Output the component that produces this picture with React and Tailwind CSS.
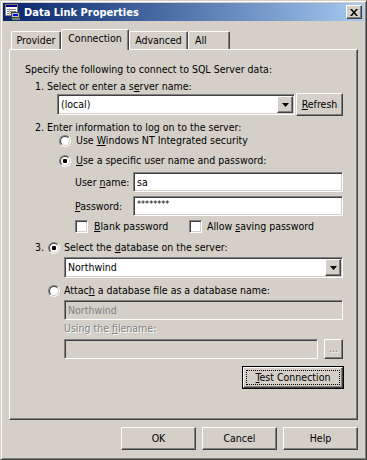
import React from "react";

const raised =
  "border border-t-white border-l-white border-r-[#404040] border-b-[#404040] shadow-[inset_-1px_-1px_0_#808080]";
const sunken =
  "border border-t-[#808080] border-l-[#808080] border-r-white border-b-white shadow-[inset_1px_1px_0_#404040,inset_-1px_-1px_0_#d4d0c8]";
const grayText = "text-[#808080] [text-shadow:1px_1px_0_#ffffff]";

function Arrow({ color = "#000" }) {
  return (
    <svg width="7" height="4" viewBox="0 0 7 4">
      <polygon points="0,0 7,0 3.5,4" fill={color} />
    </svg>
  );
}

function Combo({ value, className = "" }) {
  return (
    <div className={`flex items-stretch bg-white p-[1px] h-[21px] ${sunken} ${className}`}>
      <span className="flex-1 flex items-center pl-[2px]">{value}</span>
      <div className={`w-[16px] flex items-center justify-center bg-[#d4d0c8] ${raised}`}>
        <Arrow />
      </div>
    </div>
  );
}

function Edit({ children, className = "", disabled }) {
  return (
    <div
      className={`flex items-center h-[20px] pl-[3px] ${sunken} ${
        disabled ? "bg-[#d4d0c8] text-[#808080]" : "bg-white"
      } ${className}`}
    >
      {children}
    </div>
  );
}

function Radio({ checked }) {
  return (
    <div className="w-[12px] h-[12px] rounded-full border border-t-[#808080] border-l-[#808080] border-r-white border-b-white shrink-0">
      <div className="w-full h-full rounded-full border border-t-[#404040] border-l-[#404040] border-r-[#d4d0c8] border-b-[#d4d0c8] bg-white flex items-center justify-center">
        {checked && <div className="w-[4px] h-[4px] rounded-[1px] bg-black" />}
      </div>
    </div>
  );
}

function Check() {
  return <div className={`w-[13px] h-[13px] bg-white shrink-0 ${sunken}`} />;
}

function Button({ children, className = "" }) {
  return (
    <div className={`flex items-center justify-center bg-[#d4d0c8] ${raised} ${className}`}>
      {children}
    </div>
  );
}

function Tab({ label, selected, className = "" }) {
  return (
    <div
      className={`flex justify-center border-t border-l border-r border-t-white border-l-white border-r-[#404040] shadow-[inset_-1px_0_0_#808080] rounded-tl-[2px] rounded-tr-[2px] bg-[#d4d0c8] ${
        selected ? "h-[21px] -mb-px relative z-10 items-start pt-[2px]" : "h-[18px] items-center"
      } ${className}`}
    >
      {label}
    </div>
  );
}

function TitleIcon() {
  return (
    <svg width="16" height="16" viewBox="0 0 16 16" className="shrink-0">
      <rect x="0.5" y="0.5" width="12" height="11" fill="#fff" stroke="#808080" />
      <rect x="1" y="1" width="11" height="2" fill="#000080" />
      <line x1="2" y1="5.5" x2="11" y2="5.5" stroke="#808080" />
      <line x1="2" y1="7.5" x2="11" y2="7.5" stroke="#808080" />
      <line x1="2" y1="9.5" x2="7" y2="9.5" stroke="#808080" />
      <line x1="4.5" y1="4" x2="4.5" y2="11" stroke="#c0c0c0" />
      <rect x="6.5" y="8.5" width="8" height="5" fill="#c0c0c0" stroke="#404040" />
      <rect x="8" y="10" width="5" height="2" fill="#0000ff" />
      <rect x="7" y="14" width="8" height="2" fill="#808080" />
      <rect x="8" y="14" width="2" height="1" fill="#00c000" />
    </svg>
  );
}

export default function App() {
  return (
    <div className="w-[367px] h-[460px] bg-[#d4d0c8] border border-t-[#d4d0c8] border-l-[#d4d0c8] border-r-[#404040] border-b-[#404040] shadow-[inset_1px_1px_0_#ffffff,inset_-1px_-1px_0_#808080] p-[2px] font-['DejaVu_Sans_Condensed','Liberation_Sans',sans-serif] text-[10.5px] leading-[13px] text-black select-none">
      {/* title bar */}
      <div className="h-[18px] flex items-center bg-gradient-to-r from-[#0a246a] to-[#a6caf0] pl-[2px] pr-[2px]">
        <TitleIcon />
        <span className="ml-[3px] text-white text-[11px] font-bold flex-1">Data Link Properties</span>
        <div className={`w-[16px] h-[14px] flex items-center justify-center bg-[#d4d0c8] ${raised}`}>
          <svg width="8" height="7" viewBox="0 0 8 7">
            <path d="M0 0h2l2 2.5L6 0h2L5 3.5 8 7H6L4 4.5 2 7H0l3-3.5z" fill="#000" />
          </svg>
        </div>
      </div>

      <div className="pl-[6px] pr-[6px]">
        {/* tabs */}
        <div className="mt-[8px] h-[20px] flex items-end pl-[2px] relative z-10">
          <Tab label="Provider" className="w-[50px]" />
          <Tab label="Connection" selected className="w-[68px]" />
          <Tab label="Advanced" className="w-[59px]" />
          <Tab label="All" className="w-[42px] !justify-start pl-[6px]" />
        </div>

        {/* panel */}
        <div className="h-[371px] border border-t-white border-l-white border-r-[#404040] border-b-[#404040] shadow-[inset_-1px_-1px_0_#808080] flex flex-col">
          <div className="mt-[13px] ml-[15px]">Specify the following to connect to SQL Server data:</div>
          <div className="mt-[4px] ml-[25px]">
            1. Select or enter a s<u>e</u>rver name:
          </div>
          <div className="h-[23px] flex items-center">
            <Combo value="(local)" className="ml-[47px] w-[238px]" />
            <Button className="ml-[1px] w-[47px] h-[23px]">
              <span>
                <u>R</u>efresh
              </span>
            </Button>
          </div>
          <div className="mt-[5px] ml-[25px]">2. Enter information to log on to the server:</div>
          <div className="flex items-center ml-[49px] h-[13px]">
            <Radio />
            <span className="ml-[5px]">
              Use <u>W</u>indows NT Integrated security
            </span>
          </div>
          <div className="flex items-center ml-[49px] h-[13px] mt-[7px]">
            <Radio checked />
            <span className="ml-[5px]">
              <u>U</u>se a specific user name and password:
            </span>
          </div>
          <div className="flex items-center ml-[65px] mt-[5px]">
            <span className="w-[58px]">
              User <u>n</u>ame:
            </span>
            <Edit className="w-[210px]">sa</Edit>
          </div>
          <div className="flex items-center ml-[65px] mt-[4px]">
            <span className="w-[58px]">
              <u>P</u>assword:
            </span>
            <Edit className="w-[210px] !items-start pt-[2px]">
              <span className="text-[9px] leading-[10px]">********</span>
            </Edit>
          </div>
          <div className="flex items-center ml-[65px] mt-[4px] h-[13px]">
            <Check />
            <span className="ml-[6px] w-[95px]">
              <u>B</u>lank password
            </span>
            <Check />
            <span className="ml-[5px]">
              Allow <u>s</u>aving password
            </span>
          </div>
          <div className="flex items-center ml-[25px] mt-[8px] h-[13px]">
            <span className="w-[13px]">3.</span>
            <Radio checked />
            <span className="ml-[4px]">
              Select the <u>d</u>atabase on the server:
            </span>
          </div>
          <Combo value="Northwind" className="ml-[54px] w-[279px] mt-[3px]" />
          <div className="flex items-center ml-[38px] mt-[6px] h-[13px]">
            <Radio />
            <span className="ml-[4px]">
              Attac<u>h</u> a database file as a database name:
            </span>
          </div>
          <Edit disabled className="ml-[54px] w-[279px] mt-[3px]">
            Northwind
          </Edit>
          <div className={`ml-[54px] mt-[2px] ${grayText}`}>
            Using the <u>f</u>ilename:
          </div>
          <div className="flex items-center ml-[54px] mt-[4px]">
            <Edit disabled className="w-[254px]" />
            <Button className="ml-[6px] w-[19px] h-[20px]">
              <span className={`${grayText} -mt-[2px]`}>...</span>
            </Button>
          </div>
          <div className="ml-[232px] mt-[7px] w-[102px] h-[23px] border border-black">
            <Button className="w-full h-full p-[2px]">
              <div className="w-full h-full border border-dotted border-black flex items-center justify-center">
                <span>
                  <u>T</u>est Connection
                </span>
              </div>
            </Button>
          </div>
        </div>

        {/* footer buttons */}
        <div className="mt-[7px] flex justify-end gap-[6px]">
          <Button className="w-[75px] h-[23px]">OK</Button>
          <Button className="w-[75px] h-[23px]">Cancel</Button>
          <Button className="w-[75px] h-[23px]">Help</Button>
        </div>
      </div>
    </div>
  );
}
